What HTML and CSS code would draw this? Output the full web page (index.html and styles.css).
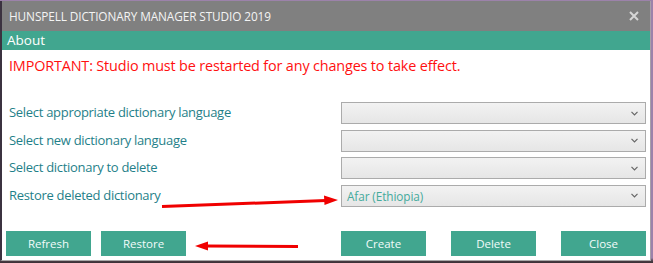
FILE: index.html
```html
<!DOCTYPE html>
<html>
<head>
<meta charset="utf-8">
<link rel="stylesheet" href="styles.css">
</head>
<body>
<div class="window">
  <div class="titlebar">
    <span class="title">HUNSPELL DICTIONARY MANAGER STUDIO 2019</span>
    <svg class="close" width="10" height="10" viewBox="0 0 10 10"><path d="M1 1L9 9M9 1L1 9" stroke="#d6d6d6" stroke-width="2"/></svg>
  </div>
  <div class="about">About</div>
  <div class="content">
    <p class="important">IMPORTANT: Studio must be restarted for any changes to take effect.</p>
    <div class="form">
      <label class="lbl">Select appropriate dictionary language</label>
      <div class="select"><span class="value"></span><svg class="chev" width="7" height="5" viewBox="0 0 7 5"><path d="M0.5 0.8L3.5 3.8L6.5 0.8" fill="none" stroke="#666" stroke-width="1.2"/></svg></div>
      <label class="lbl">Select new dictionary language</label>
      <div class="select"><span class="value"></span><svg class="chev" width="7" height="5" viewBox="0 0 7 5"><path d="M0.5 0.8L3.5 3.8L6.5 0.8" fill="none" stroke="#666" stroke-width="1.2"/></svg></div>
      <label class="lbl">Select dictionary to delete</label>
      <div class="select"><span class="value"></span><svg class="chev" width="7" height="5" viewBox="0 0 7 5"><path d="M0.5 0.8L3.5 3.8L6.5 0.8" fill="none" stroke="#666" stroke-width="1.2"/></svg></div>
      <label class="lbl">Restore deleted dictionary</label>
      <div class="select"><span class="value">Afar (Ethiopia)</span><svg class="chev" width="7" height="5" viewBox="0 0 7 5"><path d="M0.5 0.8L3.5 3.8L6.5 0.8" fill="none" stroke="#666" stroke-width="1.2"/></svg></div>
    </div>
    <div class="buttons">
      <div class="group-left">
        <button class="btn">Refresh</button>
        <button class="btn">Restore</button>
      </div>
      <div class="group-right">
        <button class="btn">Create</button>
        <button class="btn">Delete</button>
        <button class="btn">Close</button>
      </div>
    </div>
  </div>
  <svg class="arrows" width="651" height="262" viewBox="0 0 651 262">
    <path d="M162 206.5L326 200.5" stroke="#f00000" stroke-width="3" fill="none"/>
    <path d="M338 200L324 195.5L324.5 205Z" fill="#f00000"/>
    <path d="M298 246.5L206 246" stroke="#f00000" stroke-width="3" fill="none"/>
    <path d="M195 246L208 241.5L208 250.5Z" fill="#f00000"/>
  </svg>
</div>
</body>
</html>
```
FILE: styles.css
```css
html, body {
  margin: 0;
  padding: 0;
}
body {
  width: 653px;
  height: 263px;
  overflow: hidden;
  background: linear-gradient(to bottom, #9c82aa 0, #9c82aa 258px, #4a3c44 261px, #3a3036 263px);
  font-family: "Open Sans", "Noto Sans", sans-serif;
}
.window {
  position: relative;
  margin-top: 1px;
  width: 648px;
  height: 259px;
  border-left: 2px solid #3b3240;
  border-right: 1px solid #a8a0a8;
  border-bottom: 1px solid #a8a8a8;
  background: #fff;
  display: flex;
  flex-direction: column;
}
.titlebar {
  height: 30px;
  background: #808080;
  display: flex;
  align-items: center;
  justify-content: space-between;
  padding: 0 11px 0 7px;
}
.title {
  color: #f4f4f4;
  font-size: 11.8px;
  letter-spacing: -0.1px;
}
.close {
  display: block;
}
.about {
  height: 19px;
  line-height: 19px;
  background: #41a68f;
  color: #fff;
  font-size: 13.5px;
  padding-left: 5px;
}
.content {
  padding: 6px 4px 0 7px;
  display: flex;
  flex-direction: column;
}
.important {
  margin: 0;
  color: #ff1010;
  font-size: 14.4px;
  line-height: 19px;
  letter-spacing: -0.15px;
}
.form {
  margin-top: 27px;
  display: grid;
  grid-template-columns: 332px 305px;
  grid-auto-rows: 22px;
  row-gap: 5.5px;
  align-items: center;
}
.lbl {
  color: #1f7f89;
  font-size: 13px;
  letter-spacing: -0.3px;
  position: relative;
  top: -1px;
}
.select {
  box-sizing: border-box;
  height: 22px;
  border: 1px solid #ababab;
  background: linear-gradient(to bottom, #f2f2f2, #e6e6e6);
  display: flex;
  align-items: center;
  justify-content: space-between;
  padding: 0 7px 0 5px;
}
.value {
  color: #45aa9c;
  font-size: 11.8px;
  letter-spacing: -0.1px;
}
.chev {
  display: block;
}
.buttons {
  margin-top: 24px;
  margin-left: -3px;
  display: grid;
  grid-template-columns: 335px 305px;
}
.group-left {
  display: flex;
  gap: 10px;
}
.group-right {
  display: flex;
  justify-content: space-between;
}
.btn {
  width: 85px;
  height: 25px;
  border: none;
  background: #41a68f;
  color: #f2fbfa;
  font-family: "Open Sans", "Noto Sans", sans-serif;
  font-size: 11.5px;
  padding: 0;
}
.arrows {
  position: absolute;
  left: -2px;
  top: -1px;
  pointer-events: none;
}
```
